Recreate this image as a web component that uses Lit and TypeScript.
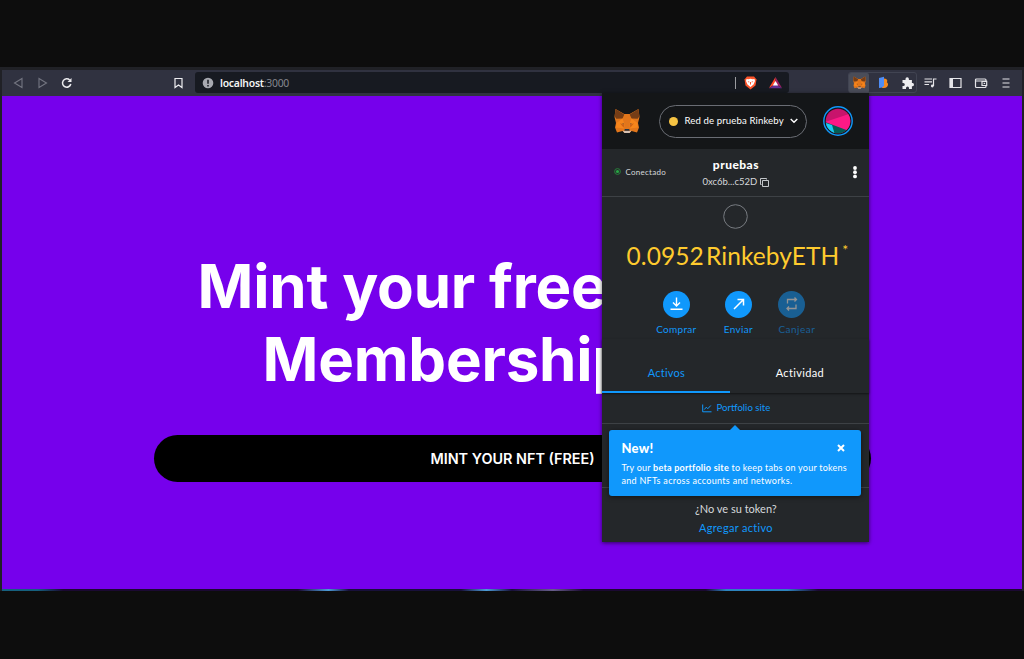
import { LitElement, html, css, svg } from "lit";
import { customElement } from "lit/decorators.js";

const fox = svg`
  <path fill="#e2761b" d="M1 1 9.8 6h5.4L24 1l1 8-1.5 6 1 4.5-2 5-5.5-1.5-2 2h-5l-2-2L2.500 24.500.500 19.500 1.500 15 0 9z"/>
  <path fill="#763d16" d="M1 1 9.800 6.500 8 10.500 1.800 10.800.200 8.500zM24 1 15.200 6.500 17 10.500l6.200.300L24.800 8.500z"/>
  <path fill="#f6851b" d="m8 10.500 2 5.500-.5 4.500-8-1L2 15zM17 10.500 15 16l.5 4.500 8-1L23 15z"/>
  <path fill="#cd6116" d="m5.500 15.200 4 1.500-.300 3zM19.500 15.200l-4 1.500.300 3z"/>
  <path fill="#6b4a32" d="m7.200 15.400 2.300.100.100 1.100zM17.800 15.400l-2.300.100-.100 1.100z"/>
  <path fill="#233447" d="M10.300 21h4.400l.500 1.800H9.800z"/>
  <path fill="#d7c1b3" d="m8 22.500 2 .600h5l2-.600-2 2.500h-5z"/>`;

@customElement("browser-bar")
class BrowserBar extends LitElement {
  static styles = css`
    :host { display: flex; align-items: center; height: 26px; box-sizing: border-box;
      background: #303240; padding: 0 10px 1px 11px; font-family: "Noto Sans", sans-serif; font-size: 10.4px; }
    svg { display: block; flex: none; }
    .nav { display: flex; gap: 12px; }
    .mark { margin-left: 100px; }
    .url { display: flex; align-items: center; width: 595px; height: 21px; margin-left: 11px; padding: 0 7px;
      box-sizing: border-box; background: #171a21; border-radius: 3px; color: #85878e; }
    .url span { margin-left: 6px; flex: 1; white-space: nowrap; letter-spacing: -.25px; }
    .url b { font-weight: 600; color: #f4f4f5; }
    .sep { width: 1px; height: 12px; background: #9b9ca0; margin-right: 8px; }
    .bat { margin-left: 12px; }
    .ext { display: flex; align-items: center; height: 21px; width: 69px; box-sizing: border-box;
      border: 1px solid #414452; border-radius: 3px; margin-left: 59px; }
    .sel { display: flex; align-items: center; justify-content: center; width: 20px; height: 20px; background: #4a4d59; border-radius: 2px; }
    .blob { margin-left: 9px; }
    .puzzle { margin-left: 12px; }
    .tools { display: flex; align-items: center; gap: 12px; margin-left: 7px; }
  `;
  render() {
    return html`
      <div class="nav">
        <svg width="12" height="14" fill="none" stroke="#747681" stroke-width="1.100"><path d="M9 2.500v9L1.500 7z"/></svg>
        <svg width="12" height="14" fill="none" stroke="#747681" stroke-width="1.100"><path d="M2 2.500v9L9.500 7z"/></svg>
        <svg width="12" height="14" fill="none" stroke="#ededf0" stroke-width="1.500"><path d="M8.700 4A4.200 4.200 0 1 0 9.800 8"/><path d="M10.500 2v4h-4z" fill="#ededf0" stroke="none"/></svg>
      </div>
      <svg class="mark" width="11" height="14" fill="none" stroke="#ededf0" stroke-width="1.200"><path d="M2 2.500h7v9L5.500 9 2 11.500z"/></svg>
      <div class="url">
        <svg width="12" height="12"><circle cx="6" cy="6" r="5.300" fill="#a7a9b0"/><path d="M6 2.700v4M6 8v1.500" stroke="#171a21" stroke-width="1.500"/></svg>
        <span><b>localhost</b>:3000</span>
        <div class="sep"></div>
        <svg width="13" height="14"><path fill="#fb542b" d="M3 .500h7l2.500 3-1 6-5 4-5-4-1-6z"/><path fill="#fff" d="m2.500 3 2 .3 2-.6 2 .6 2-.3.5 2-1.500 3.500L6.500 11 3.500 8.500 2 5z"/><path fill="#fb542b" d="m3.500 5 2 .7-.5 1zM9.500 5l-2 .7.5 1zM6 6h1v2.500H6z"/></svg>
        <svg class="bat" width="13" height="14"><path fill="#ff4724" d="M6.500 1 0 12l6.500-4z"/><path fill="#9e1f63" d="M6.500 1 13 12 6.500 8z"/><path fill="#662d91" d="M0 12.200h13L6.500 8z"/><path fill="#fff" d="m6.500 5 2.700 4.500H3.800z"/></svg>
      </div>
      <div class="ext">
        <div class="sel"><svg width="13" height="13" viewBox="0 0 25 26">${fox}</svg></div>
        <svg class="blob" width="11" height="13"><path fill="#f58a20" d="M5 2.500c4-.5 5 2 3.800 3.800C11.500 8 9.500 12 6 12H4z"/><path fill="#4f8df5" d="M1 2 6 .800v8.700q-1 2.500-5 2.500z"/></svg>
        <svg class="puzzle" width="14" height="14"><path fill="#ededf0" d="M1.500 4h3V3a1.700 1.700 0 0 1 3.400 0v1h3v3h.800a1.700 1.700 0 0 1 0 3.300h-.800V13H8v-1a1.500 1.500 0 0 0-3 0v1H1.500v-3h.800a1.500 1.500 0 0 0 0-3h-.800z"/></svg>
      </div>
      <div class="tools">
        <svg width="13" height="14" fill="none" stroke="#e4e4e8" stroke-width="1.200"><path d="M.500 3h7.500M.500 5.800h7.500M.500 8.500h4.500M9.500 10V3H12.500"/><circle cx="8.300" cy="10" r="1.400" fill="#e4e4e8" stroke="none"/></svg>
        <svg width="13" height="14" fill="none" stroke="#e4e4e8" stroke-width="1.200"><path d="M1 2.500h11v9H1z"/><path d="M2.500 2.500v9" stroke-width="3"/></svg>
        <svg width="14" height="14" fill="none" stroke="#e4e4e8" stroke-width="1.200"><path d="M12 5V4q0-1-1-1H2.500Q1.500 3 1.500 4v6.500q0 1 1 1H11q1 0 1-1V10M1.500 5H12M8 5.300h4.700v4.200H8z"/><path d="M9.600 7.400h1.500"/></svg>
        <svg width="12" height="14" stroke="#e4e4e8" stroke-width="1.100"><path d="M2.500 3h7M2.500 7h7M2.500 11h7"/></svg>
      </div>`;
  }
}

@customElement("wallet-popup")
class WalletPopup extends LitElement {
  static styles = css`
    :host { display: flex; flex-direction: column; width: 267px; height: 449px; background: #24272a; color: #fff;
      font-family: Lato, sans-serif; font-size: 10px; line-height: 14px; box-shadow: 0 1px 4px rgba(0,0,0,.6); white-space: nowrap; }
    svg { display: block; flex: none; }
    header { display: flex; align-items: center; height: 56px; box-sizing: border-box; background: #141618; padding: 0 16px 0 12px; }
    .net { display: flex; align-items: center; width: 148px; height: 33px; margin-left: 19px; padding: 0 8px 0 9px;
      box-sizing: border-box; border: 1px solid #6a6d74; border-radius: 17px; }
    .dot { flex: none; width: 9px; height: 9px; border-radius: 50%; background: #f6c343; }
    .net span { flex: 1; margin-left: 6px; font-size: 9.600px; letter-spacing: .12px; }
    .me { margin-left: 16px; }
    .account { display: grid; grid-template-columns: 83px 1fr 83px; align-items: center; height: 48px; box-sizing: border-box; border-bottom: 1px solid #3d4145; }
    .conn { display: flex; align-items: center; gap: 4px; padding: 0 0 2px 12px; font-size: 8px; letter-spacing: .28px; color: #d6d9dc; }
    .who { text-align: center; }
    .name { font-size: 12px; font-weight: 900; letter-spacing: .45px; line-height: 18px; }
    .addr { display: flex; justify-content: center; gap: 3px; font-size: 9.500px; line-height: 16px; color: #d6d9dc; }
    .addr svg { margin-top: 4px; }
    .more { justify-self: end; margin: 0 11px 2px 0; }
    .balance { display: flex; flex-direction: column; align-items: center; padding-top: 7px; }
    .amount { display: flex; margin: 11px 0 0 3px; font-size: 24.500px; line-height: 32px; color: #ffcb2e; word-spacing: -4px; letter-spacing: .06px; }
    .amount sup { font-size: 14px; line-height: 20px; margin-left: 3px; }
    .actions { display: flex; margin: 19px 0 0 43px; height: 48px; font-size: 10px; color: #1098fc; letter-spacing: .3px; }
    .act { display: flex; flex-direction: column; align-items: center; width: 62px; }
    .act svg { margin-bottom: 4px; }
    .act.off { opacity: .5; align-items: flex-start; margin-left: 9px; letter-spacing: .48px; }
    .tabs { display: flex; height: 54px; box-sizing: border-box; font-size: 11px; text-align: center; line-height: 28px; box-shadow: 0 1px 2px rgba(0,0,0,.5); }
    .tab { width: 128px; padding-top: 20px; height: 100%; box-sizing: border-box; letter-spacing: .25px; }
    .tab.on { color: #1098fc; border-bottom: 2px solid #1098fc; }
    .tab.two { width: 139px; letter-spacing: .35px; }
    .portfolio { display: flex; justify-content: center; align-items: center; gap: 5px; height: 31px; box-sizing: border-box;
      border-bottom: 1px solid #3d4145; font-size: 9.600px; color: #1098fc; }
    .token { height: 64px; box-sizing: border-box; border-bottom: 1px solid #3d4145; }
    .foot { text-align: center; font-size: 11px; line-height: 19px; padding-top: 11px; color: #d6d9dc; }
    .foot div + div { color: #1098fc; letter-spacing: .3px; }
    .tip { position: absolute; left: 7px; top: 337px; width: 252px; height: 66px; box-sizing: border-box; background: #1098fc;
      border-radius: 3px; padding: 9px 12px; box-shadow: 0 1px 5px rgba(0,0,0,.5); font-size: 9px; line-height: 12.500px; }
    .tip::before { content: ""; position: absolute; left: 121px; top: -5px; border: 5px solid transparent; border-top: 0; border-bottom-color: #1098fc; }
    .tiptop { display: flex; align-items: center; justify-content: space-between; height: 18px; margin-bottom: 5px; padding-right: 4px; font-size: 13px; font-weight: 900; letter-spacing: .3px; }
    .l1 { letter-spacing: .23px; }
    .l2 { letter-spacing: .3px; }
  `;
  render() {
    return html`
      <header>
        <svg width="26" height="26" viewBox="0 0 25 26">${fox}</svg>
        <div class="net"><div class="dot"></div><span>Red de prueba Rinkeby</span>
          <svg width="8" height="6" fill="none" stroke="#fff" stroke-width="1.400"><path d="m.700 1 3.300 3.300L7.300 1"/></svg></div>
        <svg class="me" width="30" height="30"><circle cx="15" cy="15" r="14.200" fill="#141618" stroke="#1098fc" stroke-width="1.400"/>
          <clipPath id="c"><circle cx="15" cy="15" r="12.300"/></clipPath>
          <g clip-path="url(#c)"><path fill="#c8146c" d="M0 0h30v30H0z"/><path fill="#fc1986" d="M2 16 26 8l5 14-6 3z"/><path fill="#035e56" d="m2 16 24 9-4 6H0z"/><path fill="#18cdf2" d="m0 16 9 3 3 10H2z"/></g></svg>
      </header>
      <div class="account">
        <div class="conn"><svg width="7" height="7"><circle cx="3.500" cy="3.500" r="2.900" fill="none" stroke="#28803b"/><circle cx="3.500" cy="3.500" r="1.600" fill="#28a745"/></svg><span>Conectado</span></div>
        <div class="who"><div class="name">pruebas</div>
          <div class="addr"><span>0xc6b...c52D</span><svg width="9" height="9" fill="none" stroke="#d6d9dc" stroke-width=".900"><path d="M2.500 2.500h6v6h-6zM1.500 6.500H.500v-6h6v1"/></svg></div></div>
        <svg class="more" width="6" height="14" fill="#fff"><circle cx="3" cy="3" r="1.900"/><circle cx="3" cy="7.200" r="1.900"/><circle cx="3" cy="11.400" r="1.900"/></svg>
      </div>
      <div class="balance">
        <svg width="25" height="25" fill="none" stroke="#777b80"><circle cx="12.500" cy="12.500" r="11.800"/></svg>
        <div class="amount"><span>0.0952 RinkebyETH</span><sup>*</sup></div>
      </div>
      <div class="actions">
        <div class="act"><svg width="27" height="27" fill="none" stroke="#fff" stroke-width="1.400"><circle cx="13.500" cy="13.500" r="13.500" fill="#1098fc" stroke="none"/><path d="M13.500 6.500V15M10 11.500l3.500 3.500 3.500-3.500M7.500 18.300h12"/></svg><span>Comprar</span></div>
        <div class="act"><svg width="27" height="27" fill="none" stroke="#fff" stroke-width="1.500"><circle cx="13.500" cy="13.500" r="13.500" fill="#1098fc" stroke="none"/><path d="m9 18 9.500-9.500M12.500 8.500h6v6"/></svg><span>Enviar</span></div>
        <div class="act off"><svg width="27" height="27" fill="none" stroke="#fff" stroke-width="1.300"><circle cx="13.500" cy="13.500" r="13.500" fill="#1098fc" stroke="none"/><path d="M9.500 12.500v-4h9M16.500 6.500l2 2-2 2M18 13.500v4H9M11 15.500l-2 2 2 2"/></svg><span>Canjear</span></div>
      </div>
      <div class="tabs"><div class="tab on">Activos</div><div class="tab two">Actividad</div></div>
      <div class="portfolio"><svg width="10" height="9" fill="none" stroke="#1098fc"><path d="M.700.500v7.300H9.500M2.300 5.500l2-2.300 1.500 1.500L8.800 1.500"/></svg><span>Portfolio site</span></div>
      <div class="token"></div>
      <div class="foot"><div>¿No ve su token?</div><div>Agregar activo</div></div>
      <div class="tip">
        <div class="tiptop"><span>New!</span><svg width="8" height="8" stroke="#fff" stroke-width="2"><path d="m1 1 6 6M7 1 1 7"/></svg></div>
        <div class="l1">Try our <b>beta portfolio site</b> to keep tabs on your tokens</div>
        <div class="l2">and NFTs across accounts and networks.</div>
      </div>`;
  }
}

@customElement("app-root")
class AppRoot extends LitElement {
  static styles = css`
    :host { display: block; height: 659px; box-sizing: border-box; overflow: hidden; background: #0d0d0d; padding-top: 67px; }
    .window { position: relative; height: 524px; box-sizing: border-box; padding: 3px 2px 0; background: #202126; }
    .page { height: 493px; box-sizing: border-box; background: #7600ec; overflow: hidden; padding: 154px 0 0 152px; font-family: Inter, sans-serif; color: #fff; }
    h1 { margin: 0; font-size: 60px; line-height: 73px; font-weight: 700; white-space: nowrap; letter-spacing: -.2px; }
    .a { padding-left: 43.500px; }
    .b { padding-left: 108.500px; }
    .mint { display: flex; align-items: center; justify-content: center; width: 717px; height: 47px; margin-top: 39px; border-radius: 24px; background: #000; font-size: 14.400px; font-weight: 600; }
    .edge { height: 2px; background: linear-gradient(90deg,#16607e 0,#16607e 3.500%,#1b0932 6%,#1b0932 29%,#4d9bd5 32%,#18103a 34%,#18103a 45%,#4d9bd5 47.500%,#18103a 50%,#675d8a 54%,#1b0932 57%,#1b0932 69%,#2d83bd 71%,#2d83bd 77%,#1b0932 80%,#1b0932); }
    wallet-popup { position: absolute; left: 602.400px; top: 26px; }
  `;
  render() {
    return html`<div class="window">
      <browser-bar></browser-bar>
      <div class="page"><h1><div class="a">Mint your free</div><div class="b">Membership</div></h1><div class="mint">MINT YOUR NFT (FREE)</div></div>
      <div class="edge"></div>
      <wallet-popup></wallet-popup>
    </div>`;
  }
}
